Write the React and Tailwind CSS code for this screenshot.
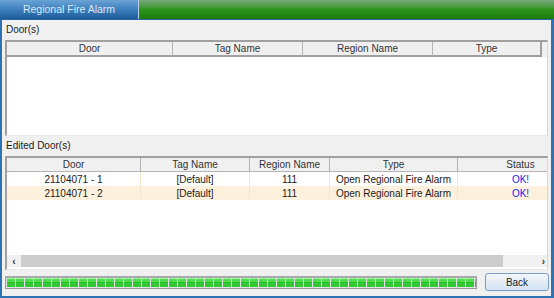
import React from "react";

const font = { fontFamily: '"Liberation Sans", Arial, sans-serif' };

function Seg() {
  return (
    <div className="flex flex-col w-[8px] shrink-0 mr-px">
      <div className="h-[1px] bg-[#9df59d]" />
      <div className="h-[3px] bg-[#4fdc4f]" />
      <div className="h-px bg-[#2bbf2b]" />
      <div className="h-[4px] bg-[#34c934]" />
    </div>
  );
}

export default function App() {
  const segs = Array.from({ length: 53 });
  return (
    <div className="w-[554px] h-[298px] flex flex-col bg-[#f0f0f0] text-[10px] text-[#1a1a1a] overflow-hidden" style={font}>
      {/* top bar */}
      <div className="flex h-[20px] shrink-0 border-b border-[#2a66a0]">
        <div className="w-[138px] flex items-center justify-center text-[10.5px] text-[#dde9f5] bg-gradient-to-b from-[#6aa3d4] via-[#3c7fbd] to-[#1b5b9a]">
          Regional Fire Alarm
        </div>
        <div className="w-px bg-[#b8d0e6]" />
        <div className="flex-1 bg-gradient-to-b from-[#7ba77b] via-[#2c9418] to-[#1c7a10]" />
      </div>
      {/* body */}
      <div className="flex-1 flex flex-col border-l-2 border-r-[3px] border-b-2 border-[#2f72b3] px-[3px]">
        <div className="h-[20px] flex items-end pl-[1px] pb-[3px]">Door(s)</div>
        {/* table 1 */}
        <div className="h-[96px] shrink-0 border-l-2 border-t-2 border-[#a0a0a0] border-r border-b border-r-[#d8d8d8] border-b-[#e8e8e8] bg-white flex flex-col">
          <div className="flex h-[15px] bg-[#f0f0f0] text-[#333]">
            <div className="w-[166px] flex items-center justify-center border-r border-[#b4b4b4] border-b-2 border-b-[#a0a0a0]">Door</div>
            <div className="w-[130px] flex items-center justify-center border-r border-[#b4b4b4] border-b-2 border-b-[#a0a0a0]">Tag Name</div>
            <div className="w-[130px] flex items-center justify-center border-r border-[#b4b4b4] border-b-2 border-b-[#a0a0a0]">Region Name</div>
            <div className="w-[109px] flex items-center justify-center border-r-2 border-[#a0a0a0] border-b-2 border-b-[#a0a0a0]">Type</div>
            <div className="flex-1" />
          </div>
          <div className="flex-1" />
        </div>
        <div className="h-[20px] flex items-end pl-[1px] pb-[3px]">Edited Door(s)</div>
        {/* table 2 */}
        <div className="h-[114px] shrink-0 border-l-2 border-t-2 border-[#a0a0a0] border-r border-b border-r-[#d8d8d8] border-b-[#e8e8e8] bg-white flex flex-col">
          <div className="flex h-[14px] bg-[#f0f0f0] text-[#333] border-b border-[#b4b4b4]">
            <div className="w-[134px] flex items-center justify-center border-r border-[#b4b4b4]">Door</div>
            <div className="w-[109px] flex items-center justify-center border-r border-[#b4b4b4]">Tag Name</div>
            <div className="w-[80px] flex items-center justify-center border-r border-[#b4b4b4]">Region Name</div>
            <div className="w-[128px] flex items-center justify-center border-r border-[#b4b4b4]">Type</div>
            <div className="flex-1 flex items-center justify-center pl-[36px]">Status</div>
          </div>
          {[
            ["21104071 - 1", "bg-white"],
            ["21104071 - 2", "bg-[#fdf1de]"],
          ].map(([d, bg]) => (
            <div key={d} className={`flex h-[14px] ${bg}`}>
              <div className="w-[134px] flex items-center justify-center border-r border-[#f5e7cf]">{d}</div>
              <div className="w-[109px] flex items-center justify-center border-r border-[#f5e7cf]">[Default]</div>
              <div className="w-[80px] flex items-center justify-center border-r border-[#f5e7cf]">111</div>
              <div className="w-[128px] flex items-center justify-center border-r border-[#f5e7cf]">Open Regional Fire Alarm</div>
              <div className="flex-1 flex items-center justify-center pl-[36px] text-[#1a1aee]">OK!</div>
            </div>
          ))}
          <div className="flex-1" />
          {/* scrollbar */}
          <div className="h-[12px] mb-[2px] flex bg-[#f0f0f0]">
            <div className="w-[14px] flex items-center justify-center text-[#333] text-[10px] font-bold">‹</div>
            <div className="w-[482px] bg-[#cdcdcd]" />
            <div className="flex-1 flex items-center justify-end pr-[2px] text-[#333] text-[10px] font-bold">›</div>
          </div>
        </div>
        {/* bottom row */}
        <div className="flex items-center mt-[3px]">
          <div className="w-[472px] h-[13px] border border-[#9a9a9a] border-t-2 border-t-[#a8a8a8] bg-[#e6e6e6] px-[1px] flex items-center overflow-hidden">
            {segs.map((_, i) => (
              <Seg key={i} />
            ))}
          </div>
          <div className="flex-1" />
          <div className="w-[64px] h-[18px] mr-[-1px] rounded-[3px] border border-[#7c9dc2] bg-gradient-to-b from-[#f3f7fc] to-[#d3e2f2] flex items-center justify-center text-[#222]">
            Back
          </div>
        </div>
      </div>
    </div>
  );
}
